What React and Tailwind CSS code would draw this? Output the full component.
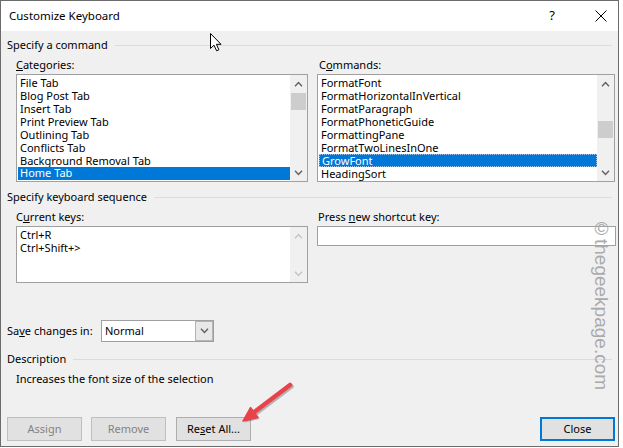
import React from "react";

function Chevron({ up, color = "#606060" }) {
  return (
    <svg width="9" height="6" viewBox="0 0 9 6">
      <path
        d={up ? "M1 5.2 L4.5 1.5 L8 5.2" : "M1 0.8 L4.5 4.5 L8 0.8"}
        fill="none"
        stroke={color}
        strokeWidth="1.4"
      />
    </svg>
  );
}

function ScrollBar({ thumbTop, disabled }) {
  const c = disabled ? "#c4c4c4" : "#606060";
  return (
    <div className="w-[17px] h-full bg-[#f0f0f0] flex flex-col shrink-0">
      <div className="h-[17px] flex items-center justify-center shrink-0">
        <Chevron up color={c} />
      </div>
      <div className="flex-1 relative">
        {thumbTop !== undefined && (
          <div
            className="absolute left-[1px] right-[1px] h-[17px] bg-[#cdcdcd]"
            style={{ top: thumbTop }}
          />
        )}
      </div>
      <div className="h-[17px] flex items-center justify-center shrink-0">
        <Chevron color={c} />
      </div>
    </div>
  );
}

function ListBox({ items, selected, thumbTop, focus }) {
  return (
    <div className="h-[108px] border border-[#a0a0a0] bg-white flex">
      <div className="flex-1 pt-[1px] flex flex-col">
        {items.map((t, i) => (
          <div
            key={t}
            className={
              i === selected
                ? "h-[13px] leading-[12px] ml-[1px] pl-[2px] bg-[#0078d7] text-white " +
                  (focus ? "border border-dotted border-[#9fc6ee] pl-[1px]" : "")
                : "h-[13px] leading-[13px] pl-[3px] whitespace-nowrap"
            }
          >
            {t}
          </div>
        ))}
      </div>
      <ScrollBar thumbTop={thumbTop} />
    </div>
  );
}

function GroupHeader({ children, className = "" }) {
  return (
    <div className={"h-[16px] flex items-center " + className}>
      <span className="leading-[16px] whitespace-nowrap">{children}</span>
      <div className="flex-1 h-px bg-[#dcdcdc] ml-[7px] mr-[4px]" />
    </div>
  );
}

function Btn({ children, disabled, primary, className = "" }) {
  return (
    <div
      className={
        "h-[24px] w-[75px] flex items-center justify-center bg-[#e1e1e1] " +
        (disabled
          ? "bg-[#cccccc] border border-[#bfbfbf] text-[#838383] "
          : primary
          ? "border-2 border-[#0078d7] "
          : "border border-[#adadad] ") +
        className
      }
    >
      {children}
    </div>
  );
}

export default function App() {
  return (
    <div className="w-[623px] h-[448px] bg-white relative overflow-hidden font-['Noto_Sans',sans-serif] text-[11px] text-black">
      <div className="w-[619px] h-[447px] border border-[#6b6b6b] flex flex-col bg-[#f0f0f0]">
        {/* title bar */}
        <div className="h-[30px] bg-white flex items-center pl-[8px] shrink-0">
          <span className="text-[11.5px]">Customize Keyboard</span>
          <span className="ml-auto text-[13px] mr-[40px]">?</span>
          <svg width="12" height="12" viewBox="0 0 12 12" className="mr-[11px]">
            <path d="M0.5 0.5 L11.5 11.5 M11.5 0.5 L0.5 11.5" stroke="#000" strokeWidth="1" />
          </svg>
        </div>

        {/* body */}
        <div className="flex-1 flex flex-col pl-[6px] pr-[2px]">
          <GroupHeader className="mt-[6px]">Specify a command</GroupHeader>

          <div className="flex ml-[9px] gap-[9px] mt-[4px]">
            <div className="w-[292px] flex flex-col">
              <div className="h-[16px] leading-[16px] mb-[1px]">
                <span className="underline">C</span>ategories:
              </div>
              <ListBox
                items={[
                  "File Tab",
                  "Blog Post Tab",
                  "Insert Tab",
                  "Print Preview Tab",
                  "Outlining Tab",
                  "Conflicts Tab",
                  "Background Removal Tab",
                  "Home Tab",
                ]}
                selected={7}
                thumbTop={1}
              />
            </div>
            <div className="w-[298px] flex flex-col">
              <div className="h-[16px] leading-[16px] mb-[1px] pl-[2px]">
                C<span className="underline">o</span>mmands:
              </div>
              <ListBox
                items={[
                  "FormatFont",
                  "FormatHorizontalInVertical",
                  "FormatParagraph",
                  "FormatPhoneticGuide",
                  "FormattingPane",
                  "FormatTwoLinesInOne",
                  "GrowFont",
                  "HeadingSort",
                ]}
                selected={6}
                thumbTop={29}
                focus
              />
            </div>
          </div>

          <GroupHeader className="mt-[7px]">Specify keyboard sequence</GroupHeader>

          <div className="flex ml-[9px] gap-[9px] mt-[4px]">
            <div className="w-[292px] flex flex-col">
              <div className="h-[16px] leading-[16px] mb-[1px]">
                C<span className="underline">u</span>rrent keys:
              </div>
              <div className="h-[57px] border border-[#a0a0a0] bg-white flex">
                <div className="flex-1 pt-[1px] pl-[3px]">
                  <div className="h-[13px] leading-[13px]">Ctrl+R</div>
                  <div className="h-[13px] leading-[13px]">Ctrl+Shift+&gt;</div>
                </div>
                <ScrollBar disabled />
              </div>
            </div>
            <div className="w-[299px] flex flex-col">
              <div className="h-[16px] leading-[16px] mb-[1px] pl-[1px]">
                Press <span className="underline">n</span>ew shortcut key:
              </div>
              <div className="h-[20px] border border-[#a0a0a0] bg-white" />
            </div>
          </div>

          <div className="flex items-center mt-[37px] h-[22px]">
            <span className="w-[94px]">
              Sa<span className="underline">v</span>e changes in:
            </span>
            <div className="w-[113px] h-[22px] border border-[#a0a0a0] bg-white flex items-center">
              <span className="pl-[3px] flex-1">Normal</span>
              <div className="w-[18px] h-[20px] border border-[#b4b4b4] bg-[#e8e8e8] flex items-center justify-center">
                <Chevron />
              </div>
            </div>
          </div>

          <GroupHeader className="mt-[9px]">Description</GroupHeader>
          <div className="mt-[4px] ml-[9px] h-[16px] leading-[16px]">
            Increases the font size of the selection
          </div>

          <div className="flex mt-[30px]">
            <Btn disabled>Assign</Btn>
            <Btn disabled className="ml-[9px]">Remove</Btn>
            <Btn className="ml-[10px]">
              <span>
                Re<span className="underline">s</span>et All...
              </span>
            </Btn>
            <Btn primary className="ml-auto mr-[1px]">Close</Btn>
          </div>
        </div>
      </div>

      {/* watermark */}
      <div className="absolute left-[592px] top-[218px] [writing-mode:vertical-rl] font-['Liberation_Sans',sans-serif] text-[19px] leading-[19px] text-[#aaaaaa]">
        ©thegeekpage.com
      </div>

      {/* red arrow */}
      <svg className="absolute left-0 top-0" width="623" height="448" viewBox="0 0 623 448">
        <g transform="translate(1.5,1.5)" opacity="0.25">
          <line x1="290" y1="385" x2="253" y2="413" stroke="#000" strokeWidth="4.5" strokeLinecap="round" />
          <polygon points="243,421 258,417.5 250.5,407.5" fill="#000" />
        </g>
        <line x1="290" y1="385" x2="253" y2="413" stroke="#e8434a" strokeWidth="4.5" strokeLinecap="round" />
        <polygon points="243,421 258,417.5 250.5,407.5" fill="#e8434a" stroke="#e8434a" strokeWidth="1.5" strokeLinejoin="round" />
      </svg>

      {/* mouse cursor */}
      <svg className="absolute left-[210px] top-[33px]" width="14" height="20" viewBox="0 0 14 20">
        <path
          d="M0.5 0.5 L0.5 15.5 L4 12.2 L6.6 17.8 L8.9 16.8 L6.4 11.3 L11 11.3 Z"
          fill="#fff"
          stroke="#000"
          strokeWidth="1"
          strokeLinejoin="round"
        />
      </svg>
    </div>
  );
}
